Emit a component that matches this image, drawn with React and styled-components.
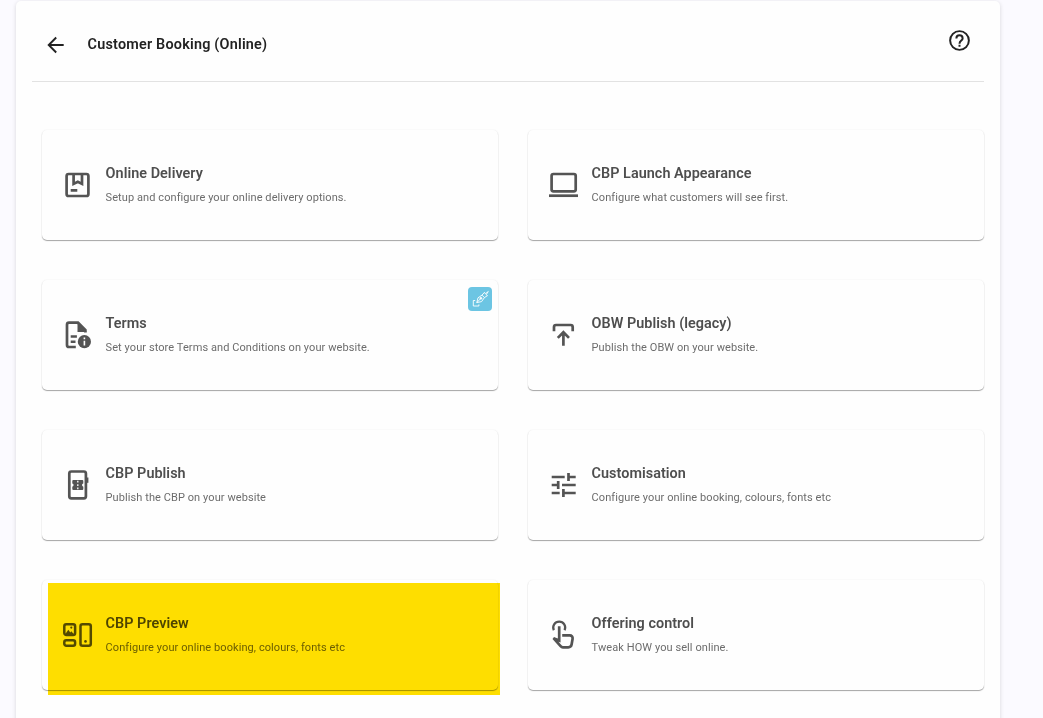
import React from "react";
import styled, { createGlobalStyle } from "styled-components";

const GlobalStyle = createGlobalStyle`
  * { box-sizing: border-box; }
  html, body { margin: 0; height: 100%; overflow: hidden; }
  body { background: #fbfaff; font-family: Roboto, sans-serif; }
`;

const Page = styled.div`
  height: 718px;
  padding: 1px 43px 0 16px;
  overflow: hidden;
`;

const Panel = styled.main`
  height: 760px;
  padding: 0 16px;
  background: #fefefe;
  border-radius: 5px;
  box-shadow: 0 1px 4px rgba(0, 0, 0, 0.15);
`;

const Header = styled.header`
  display: flex;
  align-items: center;
  height: 81px;
  padding: 8px 12px 0;
  border-bottom: 1px solid #e2e2e2;
  color: #222;
`;

const IconButton = styled.button`
  display: flex;
  padding: 0;
  border: 0;
  background: none;
  color: inherit;
  margin-top: ${(p) => p.$lift || 0}px;
`;

const Title = styled.h1`
  flex: 1;
  margin: 0 0 0 19.6px;
  font-size: 14.4px;
  font-weight: 600;
  line-height: 20px;
  letter-spacing: 0.21px;
`;

const Grid = styled.div`
  display: grid;
  grid-template-columns: 456px 456px;
  grid-auto-rows: 110px;
  gap: 40px 30px;
  padding: 48px 0 0 10px;
`;

const Card = styled.section`
  position: relative;
  display: flex;
  align-items: center;
  gap: 12.6px;
  padding-left: 19px;
  border-radius: 5px;
  background: #fefefe;
  box-shadow: 0 1px 1px rgba(0, 0, 0, 0.34), 0 0 2px rgba(0, 0, 0, 0.07);
  color: #545454;
`;

const CardText = styled.div`
  display: flex;
  flex-direction: column;
  gap: 5px;
`;

const CardTitle = styled.h2`
  margin: 0;
  font-size: 14.4px;
  font-weight: 600;
  line-height: 20px;
  letter-spacing: 0.04px;
  color: #4e4e4e;
`;

const CardDescription = styled.p`
  margin: 0;
  font-size: 11px;
  line-height: 18px;
  letter-spacing: 0.08px;
  color: #6c6c6c;
`;

const Badge = styled.span`
  position: absolute;
  top: 7px;
  right: 6px;
  display: flex;
  width: 24px;
  height: 24px;
  border-radius: 4px;
  background: #6cc5e3;
  color: #fff;
`;

const Highlight = styled.span`
  position: absolute;
  top: 3px;
  left: 6px;
  width: 452px;
  height: 112px;
  background: #ffdf00;
  mix-blend-mode: multiply;
  pointer-events: none;
`;

const Glyph = styled.svg`
  flex: none;
  width: ${(p) => p.$size || 32}px;
  height: ${(p) => p.$size || 32}px;
  fill: none;
  stroke: currentColor;
  stroke-width: ${(p) => p.$weight || 2.7};
`;

const Icon = ({ children }) => <Glyph viewBox="0 0 32 32">{children}</Glyph>;

const DeliveryIcon = () => (
  <Icon>
    <rect x="5.6" y="5" width="21.8" height="22" rx="2" />
    <path d="M12.6 5v9.9l4.2-2.1 4.2 2.1V5M9.7 21.4h6.6" />
  </Icon>
);
const LaptopIcon = () => (
  <Icon>
    <rect x="4.6" y="5" width="24.1" height="17.4" rx="1.8" />
    <path d="M2 26.7h29" />
  </Icon>
);
const TermsIcon = () => (
  <Icon>
    <path d="M14.8 28H8a2 2 0 0 1-2-2V5.7a2 2 0 0 1 2-2h9l7.4 7.4v2.5" />
    <path d="M16.5 3.5v9.6h9.2z" fill="currentColor" stroke="none" />
    <path d="M9.7 17.5h6.2M9.7 22.8h4.8" strokeWidth="2.4" />
    <circle cx="23.4" cy="22.7" r="6.6" fill="currentColor" stroke="none" />
    <path d="M23.4 21.7v4.8M23.4 18.5v1.8" stroke="#fefefe" strokeWidth="1.6" />
  </Icon>
);
const PublishIcon = () => (
  <Icon>
    <path d="M7 12.2V8a2 2 0 0 1 2-2h14.7a2 2 0 0 1 2 2v4.2M16.4 26.7V13M10.8 18.9l5.6-5.7 5.6 5.7" />
  </Icon>
);
const PhoneTicketIcon = () => (
  <Icon>
    <rect x="8.3" y="2.5" width="16.6" height="26.8" rx="2" />
    <path d="M26.4 8.5v5.3" strokeWidth="2" />
    <path
      d="M12.3 11h9a1 1 0 0 1 1 1v2.4a1.7 1.7 0 0 0 0 3.3V20a1 1 0 0 1-1 1h-9a1 1 0 0 1-1-1v-2.3a1.7 1.7 0 0 0 0-3.3V12a1 1 0 0 1 1-1z"
      fill="currentColor"
      stroke="none"
    />
    <path d="M16.8 11.8v1.7M16.8 15.2v1.7M16.8 18.6v1.7" stroke="#fefefe" strokeWidth="1.3" />
  </Icon>
);
const TuneIcon = () => (
  <Icon>
    <path d="M4.7 8h13M21.5 4v8M21.5 8h7.2M4.7 16H11M11.2 12v8M15 16h13.7M4.7 24h8M16.4 20v8M16.4 24h12.3" />
  </Icon>
);
const PreviewIcon = () => (
  <Icon>
    <rect x="3.3" y="5.2" width="10.8" height="10.8" rx="2" strokeWidth="2.5" />
    <rect x="3.3" y="21.3" width="10.8" height="5.4" rx="2" strokeWidth="2.5" />
    <rect x="19.5" y="5.2" width="10.3" height="21.5" rx="2" strokeWidth="2.5" />
    <g fill="currentColor" stroke="none">
      <circle cx="24.5" cy="22.4" r="1.3" />
      <circle cx="10.3" cy="8.6" r="1.1" />
      <path d="M4.2 15.2 7.3 10.8l2 2.6 1-1.1 2.6 2.9z" />
    </g>
  </Icon>
);
const TouchIcon = () => (
  <Icon>
    <path d="M6.8 11.2A6 6 0 1 1 17.6 11.2" strokeWidth="2.2" />
    <path
      d="M12.2 7.3v14.2l-5.7-2.3 7.1 8c.7.8 1.4 1.1 2.3 1.1h5.4c1.8 0 3-1 3.3-2.7l1-5.8c.2-2-.9-3.4-2.8-3.4h-7.6"
    />
  </Icon>
);
const BackIcon = () => (
  <Glyph viewBox="0 0 24 24" $size={24} $weight={1.9}>
    <path d="M19.7 12H5.2M12.2 4.5 4.7 12l7.5 7.5" />
  </Glyph>
);
const HelpIcon = () => (
  <Glyph viewBox="0 0 24 24" $size={25} $weight={1.9}>
    <circle cx="12" cy="12" r="9" />
    <path d="M9 10a3 3 0 1 1 6 0c0 2-3 2.1-3 5M12 16v2" />
  </Glyph>
);
const PlugIcon = () => (
  <Glyph viewBox="0 0 24 24" $size={24} $weight={0.9}>
    <path d="M7.2 13.5H5.3V19h5.6v-1.6M8.8 15.6l1.2-4.8 4-2.7 2.4 2.5-2.8 4-4.8 1 3.6-3.8M14 8.1l2.5-2.8.8 1.5 3-2.3-2.1 3.2 1.3.9-3.1 2" />
    <circle cx="12.9" cy="11.3" r="0.9" fill="currentColor" />
  </Glyph>
);

const items = [
  { title: "Online Delivery", text: "Setup and configure your online delivery options.", icon: DeliveryIcon },
  { title: "CBP Launch Appearance", text: "Configure what customers will see first.", icon: LaptopIcon },
  { title: "Terms", text: "Set your store Terms and Conditions on your website.", icon: TermsIcon, badge: true },
  { title: "OBW Publish (legacy)", text: "Publish the OBW on your website.", icon: PublishIcon },
  { title: "CBP Publish", text: "Publish the CBP on your website", icon: PhoneTicketIcon },
  { title: "Customisation", text: "Configure your online booking, colours, fonts etc", icon: TuneIcon },
  { title: "CBP Preview", text: "Configure your online booking, colours, fonts etc", icon: PreviewIcon, highlighted: true },
  { title: "Offering control", text: "Tweak HOW you sell online.", icon: TouchIcon },
];

export default function App() {
  return (
    <Page>
      <GlobalStyle />
      <Panel>
        <Header>
          <IconButton aria-label="Back"><BackIcon /></IconButton>
          <Title>Customer Booking (Online)</Title>
          <IconButton aria-label="Help" $lift={-9}><HelpIcon /></IconButton>
        </Header>
        <Grid>
          {items.map(({ title, text, icon: ItemIcon, badge, highlighted }) => (
            <Card key={title}>
              <ItemIcon />
              <CardText>
                <CardTitle>{title}</CardTitle>
                <CardDescription>{text}</CardDescription>
              </CardText>
              {badge && <Badge><PlugIcon /></Badge>}
              {highlighted && <Highlight />}
            </Card>
          ))}
        </Grid>
      </Panel>
    </Page>
  );
}
